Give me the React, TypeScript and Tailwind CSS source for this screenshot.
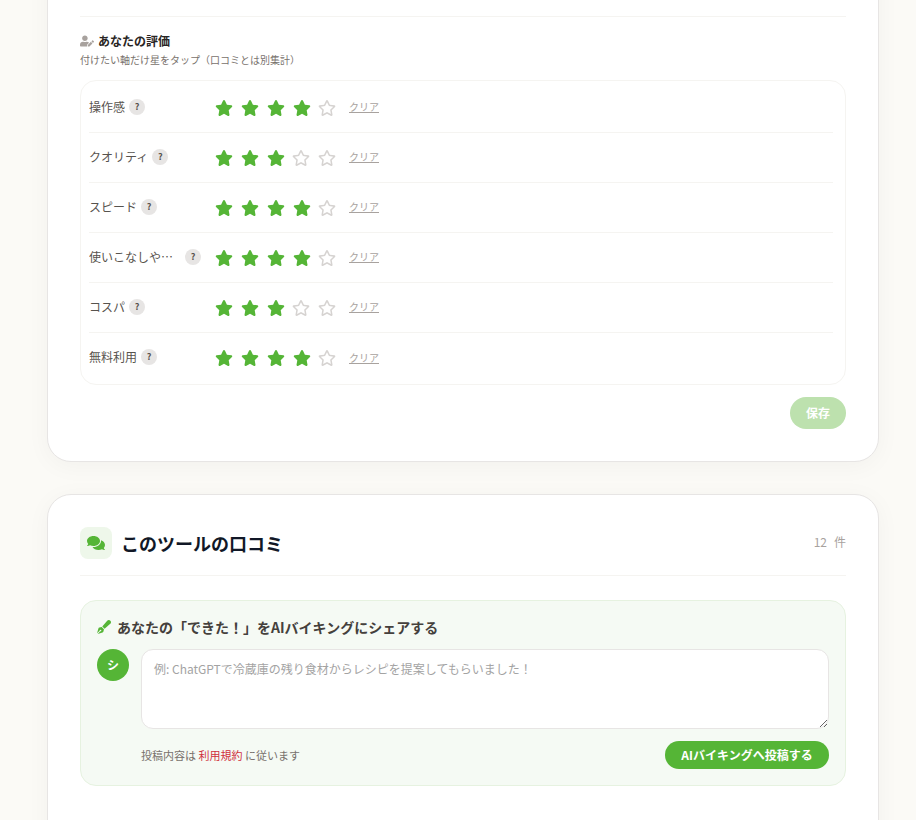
import { FaRegStar, FaComments, FaUserEdit } from "react-icons/fa";
import { FaStar, FaPenFancy } from "react-icons/fa6";

const ratings = [
  { label: "操作感", score: 4 },
  { label: "クオリティ", score: 3 },
  { label: "スピード", score: 4 },
  { label: "使いこなしやすさ", score: 4 },
  { label: "コスパ", score: 3 },
  { label: "無料利用", score: 4 },
];

function RatingRow({ label, score, last }: { label: string; score: number; last: boolean }) {
  return (
    <div className={`flex items-center h-[50px] ${last ? "" : "border-b border-[#f5f4f1]"}`}>
      <div className="w-[125px] mb-[2px] flex items-center gap-[4px] shrink-0">
        <span className="max-w-[92px] truncate text-[12px] text-[#57534e]">{label}</span>
        <span className="w-4 h-4 rounded-full bg-[#e7e5e4] text-[#57534e] text-[9px] font-bold flex items-center justify-center shrink-0">
          ?
        </span>
      </div>
      <div className="flex items-center gap-[8px]">
        {[1, 2, 3, 4, 5].map((n) =>
          n <= score ? (
            <FaStar key={n} className="w-[18px] h-[18px] translate-x-px text-[#55b536]" />
          ) : (
            <FaRegStar key={n} className="w-[18px] h-[18px] text-[#d6d3d1]" />
          )
        )}
      </div>
      <a className="ml-[13px] mb-[2px] text-[10px] text-[#a8a29e] underline">クリア</a>
    </div>
  );
}

export default function App() {
  return (
    <main className="h-[820px] overflow-hidden bg-[#fbfaf6] pl-[47px] pr-[37px] font-['Noto_Sans_CJK_JP','Noto_Sans',sans-serif]">
      {/* Rating card */}
      <section className="-mt-[200px] h-[662px] flex flex-col justify-end bg-white rounded-[24px] border border-[#e7e5e4] shadow-[0_4px_24px_rgba(0,0,0,0.04)] px-[32px] pb-[32px]">
        <div className="border-t border-[#f5f4f1] pt-[15px]">
          <div className="flex items-center gap-[4px] h-[18px]">
            <FaUserEdit className="w-[14px] h-[12px] text-[#a8a29e]" />
            <h3 className="text-[12px] font-bold text-[#292524]">あなたの評価</h3>
          </div>
          <p className="mt-[2px] text-[10px] leading-[16px] text-[#78716c]">
            付けたい軸だけ星をタップ（口コミとは別集計）
          </p>
          <div className="mt-[12px] border border-[#f5f4f1] rounded-[16px] pl-[8px] pr-[12px] pt-[2px] pb-[1px]">
            {ratings.map((r, i) => (
              <RatingRow key={r.label} label={r.label} score={r.score} last={i === ratings.length - 1} />
            ))}
          </div>
          <div className="mt-[12px] flex justify-end">
            <button className="h-[32px] w-[56px] rounded-full bg-[#bde1ae] text-white text-[12px] font-bold">
              保存
            </button>
          </div>
        </div>
      </section>

      {/* Comment card */}
      <section className="mt-[32px] h-[400px] bg-white rounded-[24px] border border-[#e7e5e4] shadow-[0_4px_24px_rgba(0,0,0,0.04)] px-[32px] pt-[32px]">
        <div className="flex items-center justify-between pb-[16px] border-b border-[#f5f4f1]">
          <div className="flex items-center gap-[9px]">
            <div className="w-8 h-8 rounded-[8px] bg-[#eef7ea] flex items-center justify-center">
              <FaComments className="w-[18px] h-[18px] text-[#55b536]" />
            </div>
            <h2 className="text-[18px] font-bold text-[#111827]">このツールの口コミ</h2>
          </div>
          <div className="text-[12px] text-[#a8a29e] flex gap-[7px] -translate-y-px">
            <span>12</span>
            <span>件</span>
          </div>
        </div>

        <div className="mt-[24px] rounded-[16px] border border-[#e6f2e0] bg-[#f5faf4] p-[16px]">
          <div className="flex items-center gap-[6px] h-[20px]">
            <FaPenFancy className="w-[14px] h-[14px] text-[#55b536]" />
            <h3 className="text-[14px] font-bold text-[#44403c]">あなたの「できた！」をAIバイキングにシェアする</h3>
          </div>
          <div className="mt-[12px] flex gap-[12px]">
            <div className="w-8 h-8 rounded-full bg-[#55b536] text-white text-[12px] font-bold flex items-center justify-center shrink-0">
              シ
            </div>
            <div className="flex-1 min-w-0">
              <textarea
                className="block w-full h-[80px] rounded-[12px] border border-[#e7e5e4] bg-white px-[12px] py-[10px] text-[12px] outline-none placeholder:text-[#a3a3a3]"
                placeholder="例: ChatGPTで冷蔵庫の残り食材からレシピを提案してもらいました！"
              />
              <div className="mt-[12px] flex items-center justify-between">
                <p className="text-[11px] text-[#78716c]">
                  投稿内容は <a className="text-[#d0303c]">利用規約</a> に従います
                </p>
                <button className="h-[28px] w-[164px] rounded-full bg-[#55b536] text-white text-[12px] font-bold">
                  AIバイキングへ投稿する
                </button>
              </div>
            </div>
          </div>
        </div>
      </section>
    </main>
  );
}
